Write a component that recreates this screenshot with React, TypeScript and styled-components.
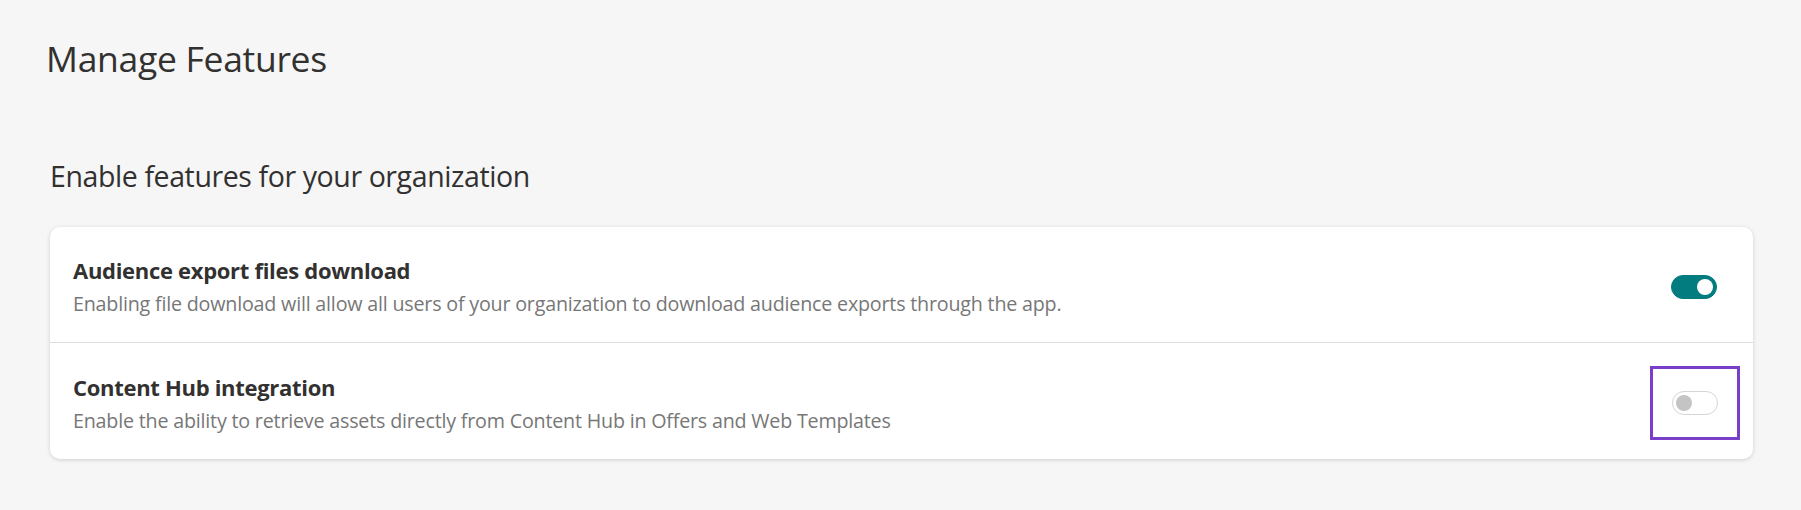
import React from "react";
import styled, { createGlobalStyle } from "styled-components";

const Global = createGlobalStyle`
  html, body { margin: 0; background: #f6f6f6; font-family: "Open Sans", "Noto Sans", sans-serif; color: #323130; }
`;
const Page = styled.div`padding: 34px 48px 0 46px; height: 510px; box-sizing: border-box;`;
const Title = styled.h1`margin: 0; font-size: 35.5px; font-weight: 400; line-height: 48px; letter-spacing: -0.3px;`;
const Sub = styled.h2`margin: 74px 0 0 4px; font-size: 28.5px; font-weight: 400; line-height: 40px; letter-spacing: -0.4px;`;
const Card = styled.div`margin: 31px 0 0 4px; background: #fff; border-radius: 10px; box-shadow: 0 1px 4px rgba(0,0,0,0.16);`;
const Row = styled.div<{ $last?: boolean }>`
  display: flex; align-items: center; justify-content: space-between; height: 116px; padding: 4px 36px 0 23px;
  box-sizing: border-box;
  border-bottom: ${p => (p.$last ? "none" : "1px solid #dcdcdc")};
`;
const Name = styled.div`font-size: 22px; font-weight: 700; line-height: 28px; letter-spacing: -0.3px;`;
const Desc = styled.div`font-size: 19.7px; color: #777; line-height: 26px; margin-top: 7px; letter-spacing: -0.2px;`;
const Focus = styled.div`width: 90px; height: 74px; box-sizing: border-box; border: 3px solid #7a3fc8; display: flex; align-items: center; justify-content: center; margin-right: -23px;`;
const Toggle = styled.div<{ $on?: boolean }>`
  width: 46px; height: 24px; border-radius: 12px; box-sizing: border-box; position: relative;
  background: ${p => (p.$on ? "#037c80" : "#fff")}; border: 1px solid ${p => (p.$on ? "#037c80" : "#d4d4d4")};
  &::after { content: ""; position: absolute; top: 3px; ${p => (p.$on ? "right: 3px; background:#fff;" : "left: 3px; background:#c4c4c4;")}
    width: 16px; height: 16px; border-radius: 50%; }
`;

export default function App() {
  return (
    <>
      <Global />
      <Page>
        <Title>Manage Features</Title>
        <Sub>Enable features for your organization</Sub>
        <Card>
          <Row>
            <div>
              <Name>Audience export files download</Name>
              <Desc>Enabling file download will allow all users of your organization to download audience exports through the app.</Desc>
            </div>
            <Toggle $on />
          </Row>
          <Row $last>
            <div>
              <Name>Content Hub integration</Name>
              <Desc>Enable the ability to retrieve assets directly from Content Hub in Offers and Web Templates</Desc>
            </div>
            <Focus><Toggle /></Focus>
          </Row>
        </Card>
      </Page>
    </>
  );
}
